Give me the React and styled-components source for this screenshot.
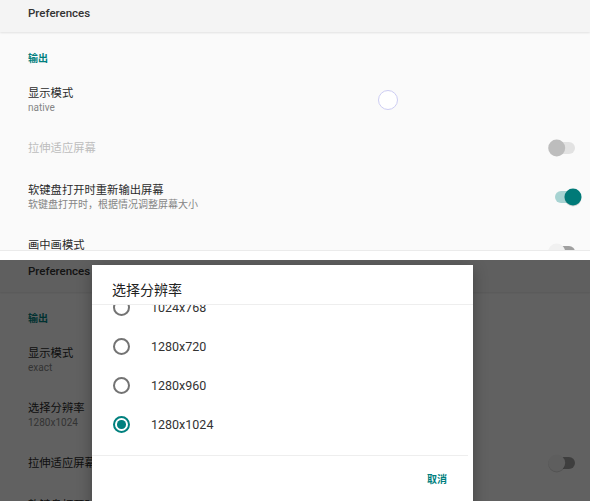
import React, { useLayoutEffect, useRef } from 'react';
import styled, { createGlobalStyle } from 'styled-components';

const TEAL = '#00807e';
const ITEM_H = 39;

const GlobalStyle = createGlobalStyle`
  html, body {
    margin: 0;
    padding: 0;
    background: #fff;
  }
  body {
    font-family: Roboto, "Noto Sans CJK SC", sans-serif;
    overflow: hidden;
  }
`;

const Page = styled.div`
  display: flex;
  flex-direction: column;
  width: 590px;
  height: 501px;
  overflow: hidden;
  background: #fff;
`;

const Screen = styled.div`
  position: relative;
  flex: none;
  height: ${p => p.$h}px;
  overflow: hidden;
  background: #fafafa;
  border-bottom: ${p => (p.$edge ? '1px solid #ebebeb' : 'none')};
`;

const Gap = styled.div`
  flex: none;
  height: 9px;
  background: #fff;
`;

const Header = styled.div`
  height: 32px;
  box-sizing: border-box;
  padding: ${p => p.$pad}px 28px 0;
  background: #f4f4f4;
  box-shadow: 0 1px 2px rgba(0, 0, 0, 0.1);
  font-size: 11.5px;
  font-weight: 500;
  line-height: 16px;
  color: #333;
`;

const Category = styled.div`
  height: 14px;
  padding: 20px 28px 6px;
  font-size: 10px;
  font-weight: 700;
  line-height: 14px;
  color: ${TEAL};
`;

const Row = styled.div`
  display: flex;
  align-items: center;
  padding: 13.5px 5px 13.5px 28px;
`;

const Texts = styled.div`
  flex: 1;
  display: flex;
  flex-direction: column;
`;

const Title = styled.div`
  height: 15px;
  font-size: 11.3px;
  line-height: 15px;
  white-space: nowrap;
  color: ${p => (p.$disabled ? '#bdbdbd' : '#2a2a2a')};
`;

const Summary = styled.div`
  height: 13px;
  font-size: 10px;
  line-height: 13px;
  white-space: nowrap;
  color: #858585;
`;

const ModeRing = styled.span`
  width: 20px;
  height: 20px;
  box-sizing: border-box;
  margin-right: 187px;
  border-radius: 50%;
  border: 1.5px solid #cdcdf3;
  background: #fff;
`;

const SwitchBox = styled.span`
  display: flex;
  height: 15px;
  align-items: center;
`;

const Scrim = styled.div`
  position: absolute;
  inset: 0;
  background: rgba(0, 0, 0, 0.61);
`;

const Dialog = styled.div`
  position: absolute;
  left: 92px;
  top: 5px;
  width: 381px;
  height: 300px;
  display: flex;
  flex-direction: column;
  background: #fff;
  box-shadow: 0 4px 14px rgba(0, 0, 0, 0.3);
`;

const DialogTitle = styled.div`
  height: 40px;
  box-sizing: border-box;
  padding: 15px 20px 0;
  font-size: 14px;
  line-height: 20px;
  color: #222;
  border-bottom: 1px solid #eeeeee;
`;

const List = styled.div`
  height: 150px;
  overflow-y: auto;
  margin-right: 5px;
  border-bottom: 1px solid #eeeeee;

  &::-webkit-scrollbar {
    width: 3px;
  }
  &::-webkit-scrollbar-track {
    background: transparent;
  }
  &::-webkit-scrollbar-thumb {
    background: #ececec;
    border-radius: 2px;
  }
`;

const Option = styled.div`
  display: flex;
  align-items: center;
  gap: 21px;
  height: ${ITEM_H}px;
  padding-left: 21px;
  font-size: 12.5px;
  color: #333;
`;

const Radio = styled.span`
  display: grid;
  place-items: center;
  width: 17px;
  height: 17px;
  box-sizing: border-box;
  border-radius: 50%;
  border: 2px solid ${p => (p.$checked ? TEAL : '#737373')};

  &::after {
    content: '';
    width: 8.5px;
    height: 8.5px;
    border-radius: 50%;
    background: ${p => (p.$checked ? TEAL : 'transparent')};
  }
`;

const Actions = styled.div`
  display: flex;
  justify-content: flex-end;
  padding: 17px 26px 0;
`;

const TextButton = styled.span`
  font-size: 10px;
  font-weight: 700;
  line-height: 14px;
  color: ${TEAL};
`;

function Switch({ on, disabled }) {
  const track = on ? '#a7d3d2' : disabled ? '#e2e2e2' : '#a0a0a0';
  const thumb = on ? '#007a78' : disabled ? '#bdbdbd' : '#f1f1f1';
  const cx = on ? 28 : 11.7;
  return (
    <SwitchBox>
      <svg width="40" height="22" viewBox="0 0 40 22">
        <rect x="10" y="5" width="20" height="12" rx="6" fill={track} />
        {!disabled && <circle cx={cx} cy="12" r="8.5" fill="rgba(0,0,0,0.15)" />}
        <circle cx={cx} cy="11" r="8.5" fill={thumb} />
      </svg>
    </SwitchBox>
  );
}

function Pref({ title, summary, disabled, widget, on }) {
  return (
    <Row>
      <Texts>
        <Title $disabled={disabled}>{title}</Title>
        {summary && <Summary>{summary}</Summary>}
      </Texts>
      {widget === 'ring' && <ModeRing />}
      {widget === 'switch' && <Switch on={on} disabled={disabled} />}
    </Row>
  );
}

const resolutions = [
  '320x240', '480x320', '640x360', '640x480', '800x480', '800x600', '854x480',
  '1024x600', '1024x768', '1280x720', '1280x960', '1280x1024', '1366x768',
  '1440x900', '1600x900', '1600x1200', '1920x1080', '1920x1200', '2560x1440',
  '2560x1600', '3840x2160',
];

function ResolutionDialog({ selected }) {
  const listRef = useRef(null);
  useLayoutEffect(() => {
    const i = resolutions.indexOf('1024x768');
    listRef.current.scrollTop = i * ITEM_H + ITEM_H / 2 - 3;
  }, []);

  return (
    <Dialog>
      <DialogTitle>选择分辨率</DialogTitle>
      <List ref={listRef}>
        {resolutions.map(r => (
          <Option key={r}>
            <Radio $checked={r === selected} />
            {r}
          </Option>
        ))}
      </List>
      <Actions>
        <TextButton>取消</TextButton>
      </Actions>
    </Dialog>
  );
}

const topPrefs = [
  { title: '显示模式', summary: 'native', widget: 'ring' },
  { title: '拉伸适应屏幕', disabled: true, widget: 'switch', on: false },
  { title: '软键盘打开时重新输出屏幕', summary: '软键盘打开时，根据情况调整屏幕大小', widget: 'switch', on: true },
  { title: '画中画模式', summary: '离开时以小窗口显示', widget: 'switch', on: false },
];

const bottomPrefs = [
  { title: '显示模式', summary: 'exact' },
  { title: '选择分辨率', summary: '1280x1024' },
  { title: '拉伸适应屏幕', widget: 'switch', on: false },
  { title: '软键盘打开时重新输出屏幕', summary: '软键盘打开时，根据情况调整屏幕大小', widget: 'switch', on: true },
];

function Preferences({ items, headerPad }) {
  return (
    <>
      <Header $pad={headerPad}>Preferences</Header>
      <Category>输出</Category>
      {items.map(p => (
        <Pref key={p.title} {...p} />
      ))}
    </>
  );
}

export default function App() {
  return (
    <Page>
      <GlobalStyle />
      <Screen $h={250} $edge>
        <Preferences items={topPrefs} headerPad={5} />
      </Screen>
      <Gap />
      <Screen $h={242}>
        <Preferences items={bottomPrefs} headerPad={3} />
        <Scrim />
        <ResolutionDialog selected="1280x1024" />
      </Screen>
    </Page>
  );
}
